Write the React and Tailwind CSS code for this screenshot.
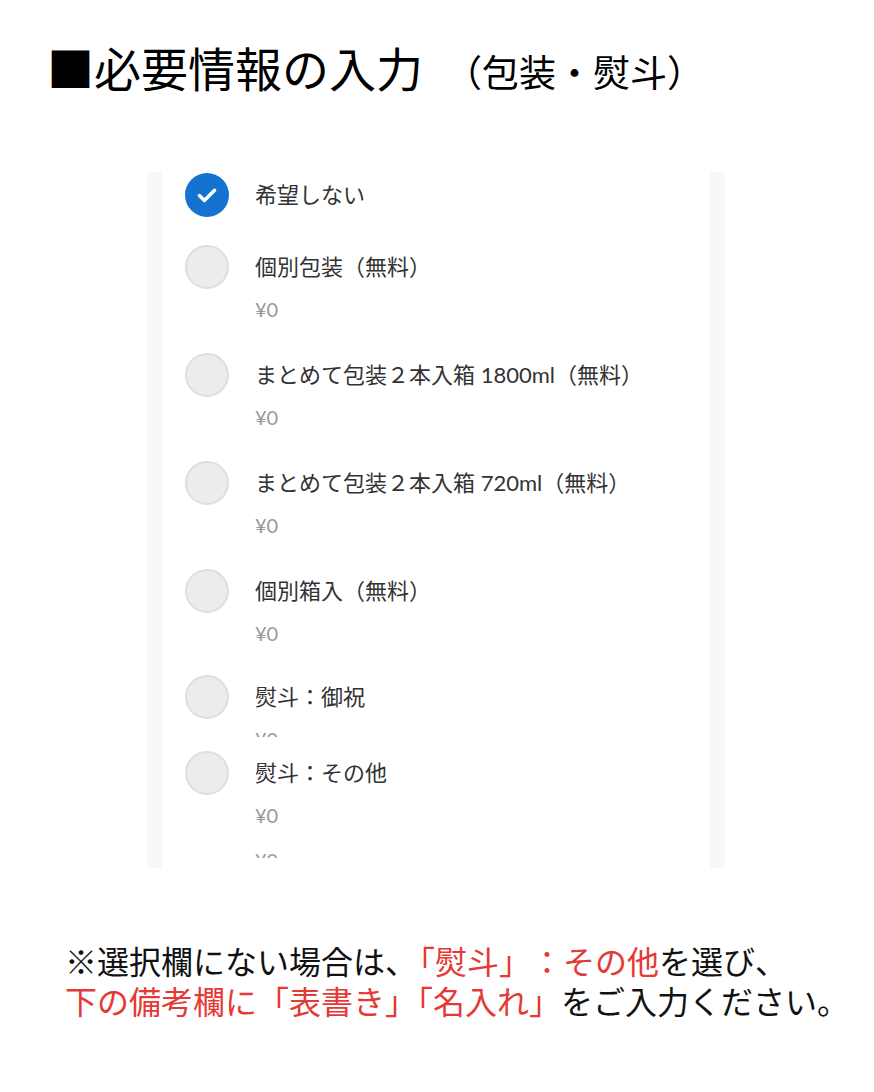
import React from "react";

const jp = { fontFamily: "'Noto Sans CJK JP', sans-serif" };
const ui = { fontFamily: "Lato, 'Noto Sans CJK JP', sans-serif" };

const options = [
  { label: "希望しない", checked: true },
  { label: "個別包装（無料）", price: "¥0" },
  { label: "まとめて包装２本入箱 1800ml（無料）", price: "¥0" },
  { label: "まとめて包装２本入箱 720ml（無料）", price: "¥0" },
  { label: "個別箱入（無料）", price: "¥0" },
];

// radio bullet
const Radio = ({ checked }) =>
  checked ? (
    <div className="w-[44px] h-[44px] rounded-full bg-[#1672d0] flex items-center justify-center shrink-0">
      <svg width="26" height="26" viewBox="0 0 24 24" fill="none">
        <path d="M5 12.5l4.6 4.6L19 7.6" stroke="#fff" strokeWidth="3.2" strokeLinecap="round" strokeLinejoin="round" />
      </svg>
    </div>
  ) : (
    <div className="w-[44px] h-[44px] rounded-full bg-[#ececec] border-2 border-[#dedede] shrink-0" />
  );

const Option = ({ label, price, checked, className = "" }) => (
  <div className={`flex ${className}`}>
    <Radio checked={checked} />
    <div className="ml-[26px]">
      <div className="text-[22px] leading-[44px] text-[#333]">{label}</div>
      {price && <div className="mt-[6px] text-[20px] leading-[28px] text-[#999]">{price}</div>}
    </div>
  </div>
);

export default function App() {
  return (
    <div className="w-[874px] h-[1092px] bg-white overflow-hidden">
      <h1 className="pt-[38px] pl-[47px] h-[99px] text-black font-normal leading-[58px] whitespace-nowrap [text-spacing-trim:space-all]" style={jp}>
        <span className="text-[47px]">■必要情報の入力</span>
        <span className="text-[37px] ml-[22px]">（包装・熨斗）</span>
      </h1>

      {/* first screenshot slice */}
      <div className="mt-[73px] ml-[147px] w-[578px] h-[565px] bg-[#f8f8f8] px-[15px] overflow-hidden" style={ui}>
        <div className="bg-white h-full pl-[23px] pt-px">
          {options.map((o, i) => (
            <Option key={i} {...o} className={i === 0 ? "mb-[28px]" : "mb-[30px]"} />
          ))}
          <Option label="熨斗：御祝" price="¥0" className="-mt-[2px]" />
        </div>
      </div>

      {/* second screenshot slice */}
      <div className="ml-[147px] w-[578px] h-[131px] bg-[#f8f8f8] px-[15px] overflow-hidden" style={ui}>
        <div className="bg-white h-full pl-[23px] pt-[14px]">
          <div className="h-[107px] overflow-hidden">
            <Option label="熨斗：その他" price="¥0" />
            <div className="ml-[70px] mt-[17px] text-[20px] leading-[28px] text-[#999]">¥0</div>
          </div>
        </div>
      </div>

      <div className="mt-[72px] pl-[65px] text-[32px] leading-[40px] text-[#111] whitespace-nowrap" style={jp}>
        <p className="[text-spacing-trim:space-all]">
          ※選択欄にない場合は<span className="tracking-[-14px]">、</span>
          <span className="text-[#e53935]">「熨斗」：その他</span>を選び、
        </p>
        <p>
          <span className="text-[#e53935]">下の備考欄に「表書き」「名入れ」</span>をご入力ください。
        </p>
      </div>
    </div>
  );
}
